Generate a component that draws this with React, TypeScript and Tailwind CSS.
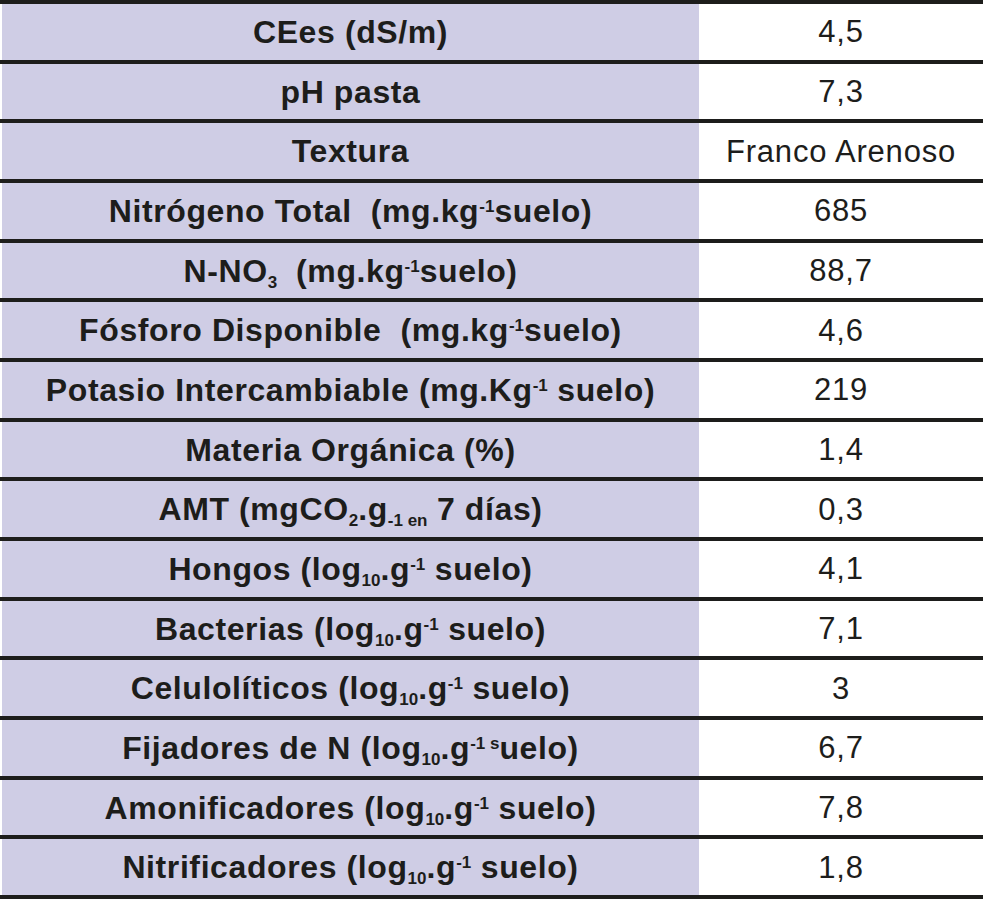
import React from 'react';

const Sup = ({ children }: { children: React.ReactNode }) => (
  <sup className="text-[17px] tracking-normal relative -top-[10px]">{children}</sup>
);
const Sub = ({ children }: { children: React.ReactNode }) => (
  <sub className="text-[17px] tracking-normal relative top-[6px]">{children}</sub>
);

const rows: { label: React.ReactNode; value: string }[] = [
  { label: 'CEes (dS/m)', value: '4,5' },
  { label: 'pH pasta', value: '7,3' },
  { label: 'Textura', value: 'Franco Arenoso' },
  { label: <>Nitrógeno Total&nbsp; (mg.kg<Sup>-1</Sup>suelo)</>, value: '685' },
  { label: <>N-NO<Sub>3</Sub>&nbsp; (mg.kg<Sup>-1</Sup>suelo)</>, value: '88,7' },
  { label: <>Fósforo Disponible&nbsp; (mg.kg<Sup>-1</Sup>suelo)</>, value: '4,6' },
  { label: <>Potasio Intercambiable (mg.Kg<Sup>-1</Sup> suelo)</>, value: '219' },
  { label: 'Materia Orgánica (%)', value: '1,4' },
  { label: <>AMT (mgCO<Sub>2</Sub>.g<Sub>-1 en</Sub> 7 días)</>, value: '0,3' },
  { label: <>Hongos (log<Sub>10</Sub>.g<Sup>-1</Sup> suelo)</>, value: '4,1' },
  { label: <>Bacterias (log<Sub>10</Sub>.g<Sup>-1</Sup> suelo)</>, value: '7,1' },
  { label: <>Celulolíticos (log<Sub>10</Sub>.g<Sup>-1</Sup> suelo)</>, value: '3' },
  { label: <>Fijadores de N (log<Sub>10</Sub>.g<Sup>-1 s</Sup>uelo)</>, value: '6,7' },
  { label: <>Amonificadores (log<Sub>10</Sub>.g<Sup>-1</Sup> suelo)</>, value: '7,8' },
  { label: <>Nitrificadores (log<Sub>10</Sub>.g<Sup>-1</Sup> suelo)</>, value: '1,8' },
];

export default function App() {
  return (
    <div className="w-[983px] h-[899px] bg-white font-['Liberation_Sans',Arial,sans-serif] text-[#1d1d1b]">
      <div className="h-full flex flex-col border-y-4 border-[#1d1d1b] divide-y-4 divide-[#1d1d1b]">
        {rows.map((r, i) => (
          <div key={i} className="flex-1 flex">
            <div className="w-[697px] ml-[2px] bg-[#cfcde5] flex items-center justify-center font-bold text-[32px] tracking-[0.6px] leading-none whitespace-nowrap">
              <span>{r.label}</span>
            </div>
            <div className="flex-1 flex items-center justify-center text-[31px] tracking-[0.8px] leading-none">
              {r.value}
            </div>
          </div>
        ))}
      </div>
    </div>
  );
}
